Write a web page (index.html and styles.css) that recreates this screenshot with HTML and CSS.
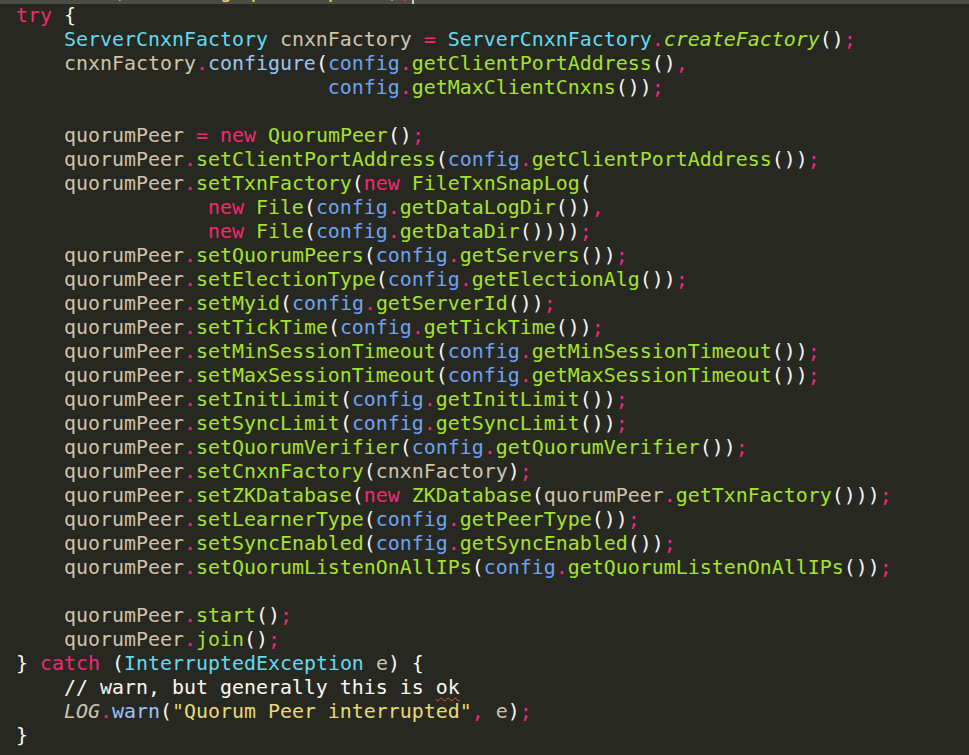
FILE: index.html
```html
<!DOCTYPE html>
<html lang="en">
<head>
  <meta charset="UTF-8">
  <title>QuorumPeerMain.java</title>
  <link rel="stylesheet" href="styles.css">
</head>
<body>

  <div class="editor">
<div class="ln current"><span class="v it">LOG</span><span class="p">.</span><span class="m">info</span>(<span class="s">"Starting quorum peer"</span>)<span class="p">;</span><span class="caret"></span></div>
<div class="ln"><span class="k">try</span> {</div>
<div class="ln">    <span class="t">ServerCnxnFactory</span> <span class="v">cnxnFactory</span> <span class="p">=</span> <span class="t">ServerCnxnFactory</span><span class="p">.</span><span class="f it">createFactory</span>()<span class="p">;</span></div>
<div class="ln">    <span class="v">cnxnFactory</span><span class="p">.</span><span class="m">configure</span>(<span class="c">config</span><span class="p">.</span><span class="f">getClientPortAddress</span>()<span class="p">,</span></div>
<div class="ln">                          <span class="c">config</span><span class="p">.</span><span class="f">getMaxClientCnxns</span>())<span class="p">;</span></div>
<div class="ln"> </div>
<div class="ln">    <span class="v">quorumPeer</span> <span class="p">=</span> <span class="k">new</span> <span class="f">QuorumPeer</span>()<span class="p">;</span></div>
<div class="ln">    <span class="v">quorumPeer</span><span class="p">.</span><span class="f">setClientPortAddress</span>(<span class="c">config</span><span class="p">.</span><span class="f">getClientPortAddress</span>())<span class="p">;</span></div>
<div class="ln">    <span class="v">quorumPeer</span><span class="p">.</span><span class="f">setTxnFactory</span>(<span class="k">new</span> <span class="f">FileTxnSnapLog</span>(</div>
<div class="ln">                <span class="k">new</span> <span class="f">File</span>(<span class="c">config</span><span class="p">.</span><span class="f">getDataLogDir</span>())<span class="p">,</span></div>
<div class="ln">                <span class="k">new</span> <span class="f">File</span>(<span class="c">config</span><span class="p">.</span><span class="f">getDataDir</span>())))<span class="p">;</span></div>
<div class="ln">    <span class="v">quorumPeer</span><span class="p">.</span><span class="f">setQuorumPeers</span>(<span class="c">config</span><span class="p">.</span><span class="f">getServers</span>())<span class="p">;</span></div>
<div class="ln">    <span class="v">quorumPeer</span><span class="p">.</span><span class="f">setElectionType</span>(<span class="c">config</span><span class="p">.</span><span class="f">getElectionAlg</span>())<span class="p">;</span></div>
<div class="ln">    <span class="v">quorumPeer</span><span class="p">.</span><span class="f">setMyid</span>(<span class="c">config</span><span class="p">.</span><span class="f">getServerId</span>())<span class="p">;</span></div>
<div class="ln">    <span class="v">quorumPeer</span><span class="p">.</span><span class="f">setTickTime</span>(<span class="c">config</span><span class="p">.</span><span class="f">getTickTime</span>())<span class="p">;</span></div>
<div class="ln">    <span class="v">quorumPeer</span><span class="p">.</span><span class="f">setMinSessionTimeout</span>(<span class="c">config</span><span class="p">.</span><span class="f">getMinSessionTimeout</span>())<span class="p">;</span></div>
<div class="ln">    <span class="v">quorumPeer</span><span class="p">.</span><span class="f">setMaxSessionTimeout</span>(<span class="c">config</span><span class="p">.</span><span class="f">getMaxSessionTimeout</span>())<span class="p">;</span></div>
<div class="ln">    <span class="v">quorumPeer</span><span class="p">.</span><span class="f">setInitLimit</span>(<span class="c">config</span><span class="p">.</span><span class="f">getInitLimit</span>())<span class="p">;</span></div>
<div class="ln">    <span class="v">quorumPeer</span><span class="p">.</span><span class="f">setSyncLimit</span>(<span class="c">config</span><span class="p">.</span><span class="f">getSyncLimit</span>())<span class="p">;</span></div>
<div class="ln">    <span class="v">quorumPeer</span><span class="p">.</span><span class="f">setQuorumVerifier</span>(<span class="c">config</span><span class="p">.</span><span class="f">getQuorumVerifier</span>())<span class="p">;</span></div>
<div class="ln">    <span class="v">quorumPeer</span><span class="p">.</span><span class="f">setCnxnFactory</span>(<span class="v">cnxnFactory</span>)<span class="p">;</span></div>
<div class="ln">    <span class="v">quorumPeer</span><span class="p">.</span><span class="f">setZKDatabase</span>(<span class="k">new</span> <span class="f">ZKDatabase</span>(<span class="v">quorumPeer</span><span class="p">.</span><span class="f">getTxnFactory</span>()))<span class="p">;</span></div>
<div class="ln">    <span class="v">quorumPeer</span><span class="p">.</span><span class="f">setLearnerType</span>(<span class="c">config</span><span class="p">.</span><span class="f">getPeerType</span>())<span class="p">;</span></div>
<div class="ln">    <span class="v">quorumPeer</span><span class="p">.</span><span class="f">setSyncEnabled</span>(<span class="c">config</span><span class="p">.</span><span class="f">getSyncEnabled</span>())<span class="p">;</span></div>
<div class="ln">    <span class="v">quorumPeer</span><span class="p">.</span><span class="f">setQuorumListenOnAllIPs</span>(<span class="c">config</span><span class="p">.</span><span class="f">getQuorumListenOnAllIPs</span>())<span class="p">;</span></div>
<div class="ln"> </div>
<div class="ln">    <span class="v">quorumPeer</span><span class="p">.</span><span class="f">start</span>()<span class="p">;</span></div>
<div class="ln">    <span class="v">quorumPeer</span><span class="p">.</span><span class="f">join</span>()<span class="p">;</span></div>
<div class="ln">} <span class="k">catch</span> (<span class="t">InterruptedException</span> <span class="v">e</span>) {</div>
<div class="ln">    <span class="cm">// warn, but generally this is <span class="typo">ok</span></span></div>
<div class="ln">    <span class="v it">LOG</span><span class="p">.</span><span class="m">warn</span>(<span class="s">"Quorum Peer interrupted"</span><span class="p">,</span> <span class="v">e</span>)<span class="p">;</span></div>
<div class="ln">}</div>
  </div>

</body>
</html>
```

FILE: styles.css
```css
html, body { margin: 0; background: #272822; }
body { overflow: hidden; height: 755px; }
.editor { margin-top: -20px; font-family: "DejaVu Sans Mono", "Liberation Mono", monospace; font-size: 19.93px; color: #f8f8f2; }
.ln { white-space: pre; height: 24px; line-height: 24px; padding-left: 16px; }
.current { background: #4d4d43; }
.caret { display: inline-block; width: 2px; height: 24px; vertical-align: top; background: #c8c8c0; }
.k { color: #f92672; }
.t { color: #66d9ef; }
.f { color: #a6e22e; }
.v { color: #cfc4ab; }
.c { color: #6ea3ee; }
.m { color: #9fc3f2; }
.p { color: #f92672; }
.s { color: #e6db74; }
.cm { color: #f8f8f2; }
.it { font-style: italic; }
.typo { text-decoration: underline wavy #e0582a; text-decoration-thickness: 1px; text-underline-offset: 3px; }
```
